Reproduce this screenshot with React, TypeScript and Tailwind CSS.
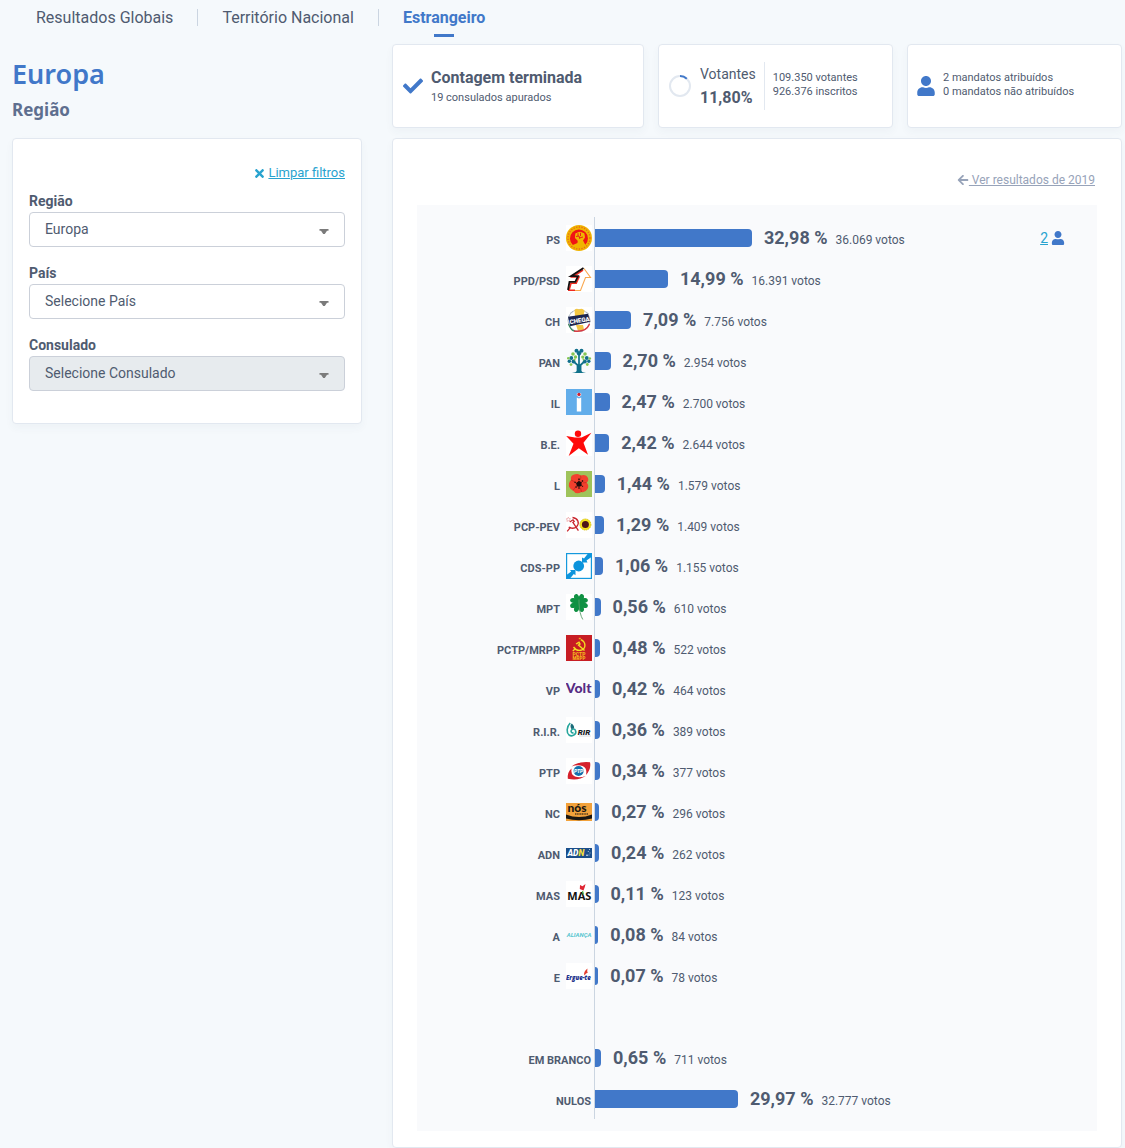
import React, { useState } from 'react';
import { FaArrowLeft, FaCheck, FaTimes, FaUser } from 'react-icons/fa';

type Result = {
    party: string;
    percent: string;
    votes: string;
    logo?: React.ReactNode;
    seats?: number;
};

const Logo: React.FC<{ children: React.ReactNode; bg?: string }> = ({ children, bg = '#fff' }) => (
    <svg viewBox="0 0 26 26" className="h-[26px] w-[26px] shrink-0" aria-hidden="true">
        <rect width="26" height="26" fill={bg} />
        {children}
    </svg>
);

const LogoPS = (
    <Logo>
        <circle cx="13" cy="13" r="13" fill="#f0b400" />
        <circle cx="13" cy="13" r="11" fill="none" stroke="#e8641e" strokeWidth="1.4" strokeDasharray="1.2 1.5" />
        <path d="M6.8 20A9 9 0 1 1 19.3 19.8L17 15.6 19 12.5 18.2 8.2 14 6.8 9.8 8.2 9 12.6 12 15.8 11.5 18Z" fill="#f01414" />
        <path d="M11.8 21.8V15.8L9 13 9.5 8.5 13.8 7 18 8.5 18.5 12 16.3 15V22Z" fill="#f0b400" />
        <path d="M10 11.5 13 11M12 8.2v2.8M14.5 7.8V11M13 13l4-1M13 11l.8 2.8" fill="none" stroke="#e8141c" strokeWidth="0.9" />
    </Logo>
);

const LogoPSD = (
    <Logo>
        <path d="M18 2.5 24.5 11.5H19.5L14.5 24.5H9" fill="none" stroke="#f9a850" strokeWidth="1.1" />
        <path d="M17 4 6.5 11H13L10.2 17.2H5L3 24.3H9" fill="none" stroke="#f02a20" strokeWidth="1.6" />
        <path d="M17.5 2 5 10.2H12L9.3 15.8H3.5L2 24" fill="none" stroke="#151010" strokeWidth="1.8" />
    </Logo>
);

const LogoCH = (
    <Logo>
        <circle cx="13" cy="13.5" r="11" fill="none" stroke="#b5bec8" strokeWidth="1" />
        <path d="M8.5 3Q10.5 1 13 2.5 16 .5 18.5 3.5L17.5 9H9Z" fill="#f3c743" />
        <path d="M10 18H17L18 22.5 12 24Z" fill="#f1c445" />
        <path d="M2.5 17C4.5 22.5 7 24 9 24.2" fill="none" stroke="#38845c" strokeWidth="1.2" />
        <path d="M8 24Q20 25.5 23.5 17" fill="none" stroke="#d93a43" strokeWidth="1.5" />
        <path d="M2 9.8 22 6.8 24.4 14.8 4.2 19.3Z" fill="#1c2550" />
        <text x="3.4" y="15.7" fontSize="6.2" fontWeight="900" fill="#fff" transform="rotate(-9 13 13)">CHEGA</text>
        <path d="M4 6.5 7 4.3M20 5l3 2.2" stroke="#aeb9c4" />
    </Logo>
);

const LogoPAN = (
    <Logo bg="#f9fafc">
        <path d="M11.5 24V17L7 13M13 24V6M14.6 24V17L19 13" fill="none" stroke="#10718a" strokeWidth="1.7" />
        <path d="M6 25Q10 24.8 11.5 22.5H14.6Q16 24.8 20 25Z" fill="#10718a" />
        <g fill="#116f8c">
            <circle cx="10.5" cy="2.8" r="2" /><circle cx="15.5" cy="2.8" r="2" /><circle cx="13" cy="5.2" r="2.2" />
            <circle cx="5.3" cy="10" r="1.9" /><circle cx="3.3" cy="13.3" r="1.7" /><circle cx="7.5" cy="13.5" r="2" />
            <circle cx="20.8" cy="10" r="1.9" /><circle cx="22.8" cy="13.3" r="1.7" /><circle cx="18.8" cy="13.5" r="2" />
        </g>
        <g fill="#85c653">
            <circle cx="7" cy="6" r="1.8" /><circle cx="9.5" cy="9" r="1.7" /><circle cx="19" cy="6" r="1.8" />
            <circle cx="16.8" cy="9.1" r="1.7" /><circle cx="2.3" cy="10.3" r="1.3" /><circle cx="8.6" cy="11.5" r="1" />
            <circle cx="23.8" cy="10.5" r="1.3" /><circle cx="17.5" cy="11.5" r="1" /><circle cx="5" cy="16.6" r="1.4" />
            <circle cx="21.3" cy="16.5" r="1.4" />
        </g>
    </Logo>
);

const LogoIL = (
    <Logo bg="#62adea">
        <path d="M10.8 4.6 13 3.8 15.2 4.6V6.6L13 8 10.8 6.6Z" fill="#fff" />
        <circle cx="13" cy="5.4" r="1.7" fill="#cf2031" />
        <path d="M10.8 8.5 13 9.5 15.2 8.5V22.5H10.8Z" fill="#fff" />
    </Logo>
);

const LogoBE = (
    <Logo>
        <circle cx="12" cy="3.8" r="3.2" fill="#ff0a0a" />
        <path d="M.2 6 9 7.5H15.5L25.5 2.8 17.5 12.8 22 24.8 12.8 18.3 2.7 26 7.5 13.7Z" fill="#ff0a0a" />
    </Logo>
);

const LogoL = (
    <Logo bg="#9fc35b">
        <path d="M5 9Q4 4 9 3.2 13 2.2 14.5 4.5 20 2.5 22 7 23 10 20.5 11.5 23.5 14.5 21.5 18 19 22 15.5 21 10 24 7 19.5 2 17 3 12.5 3.5 10 5 9Z" fill="#f3402e" />
        <path d="M14.5 4.5Q15.5 7 14 9M20.5 11.5 17 12M15.5 21 14.5 17M7 19.5 9.5 16M5 9 9 11" fill="none" stroke="#c4281c" strokeWidth=".7" />
        <circle cx="13" cy="13" r="2.6" fill="#200c0c" />
        <path d="M13 7.5v11M8.5 11l8.5 4.5M17 9.5l-7.5 7" stroke="#200c0c" strokeWidth="1.4" strokeDasharray="1.4 .8" />
    </Logo>
);

const LogoPCP = (
    <Logo>
        <path d="M6.5 5.5C12 6 13.8 11 10.8 14.5 8.5 17 4.5 16.5 2.7 15" fill="none" stroke="#c9252d" strokeWidth="1.3" />
        <path d="M3.8 10 7 7.8 8.2 9.4 6.9 10.4 12.4 18.6M4.6 15.2 1.2 19.3" fill="none" stroke="#c9252d" strokeWidth="1.3" />
        <path d="M2.3 5.2l.7 1.4 1.5.2-1.1 1.1.2 1.5L2.3 8.7.9 9.4l.3-1.5L.1 6.8l1.5-.2Z" fill="none" stroke="#e0787c" strokeWidth=".5" />
        <circle cx="19.4" cy="12.5" r="5.5" fill="#f8e51c" stroke="#d9c51b" strokeWidth="1" strokeDasharray="1.5 .7" />
        <circle cx="19.4" cy="12.5" r="3.5" fill="#4d1517" />
    </Logo>
);

const LogoCDS = (
    <Logo>
        <rect x=".6" y=".6" width="24.8" height="24.8" fill="none" stroke="#1599dd" strokeWidth="1.2" />
        <circle cx="12.7" cy="13" r="5.4" fill="#0d94dc" />
        <path d="M16 4.5V9.5H21.5L20.5 7.5 25.5 4V.5H22L18 5.5ZM4 17H9.5V22.3L7.8 21 4 25.5H.5V22L5.2 18.5Z" fill="#0d94dc" />
    </Logo>
);

const cloverLeaf = 'M13 9C10.6 7 7.6 4.8 8 2 8.4-.2 11.8-.8 13 2.4 14.2-.8 17.6-.2 18 2 18.4 4.8 15.4 7 13 9Z';

const LogoMPT = (
    <Logo>
        <g fill="#109143">
            <path d={cloverLeaf} transform="rotate(45 13 9)" />
            <path d={cloverLeaf} transform="rotate(135 13 9)" />
            <path d={cloverLeaf} transform="rotate(225 13 9)" />
            <path d={cloverLeaf} transform="rotate(315 13 9)" />
        </g>
        <path d="M13 5.5V9M13 9Q13.5 20 16.8 25.5" fill="none" stroke="#5c9f6d" strokeWidth=".9" />
    </Logo>
);

const LogoPCTP = (
    <Logo bg="#c71d24">
        <path d="M14.8 4.6C20.3 7 20 13.5 15.5 15 11.5 16.2 8.5 13.5 7.5 12M10 9 13 7.3 14 9 12.5 10 18.5 15.5M9 14 6.8 16" fill="none" stroke="#f3dd20" strokeWidth="1.4" />
        <path d="M12.8 3.5h2" stroke="#f3a81e" strokeWidth="1.4" />
        <text x="13" y="20.6" fontSize="5" fontWeight="900" fill="#f3b51e" textAnchor="middle">PCTP</text>
        <text x="13" y="24.8" fontSize="4.6" fontWeight="900" fill="#f3b51e" textAnchor="middle">MRPP</text>
    </Logo>
);

const LogoVolt = (
    <Logo bg="#f9fafc">
        <text x="-.2" y="17" fontSize="14" fontWeight="900" fill="#572b83" className="font-['Lato',sans-serif]">Volt</text>
    </Logo>
);

const LogoRIR = (
    <Logo>
        <path d="M4.2 6C.2 10 .5 16 3 18 6.5 20.3 11 17 9.5 13.5 8.8 11.5 6 11.5 5.3 13.5 4.5 15 6 16.5 7.5 15.5" fill="none" stroke="#26a59d" strokeWidth="1.6" />
        <path d="M5.3 12Q3.5 8.5 5.8 6.5 9 9.5 7.8 11.5Z" fill="#1a6c79" />
        <text x="11.8" y="17.6" fontSize="8" fontWeight="900" fontStyle="italic" fill="#191c1f">RIR</text>
        <path d="M13 19h12" stroke="#c2c6c9" strokeWidth=".6" />
    </Logo>
);

const LogoPTP = (
    <Logo>
        <path d="M5.5 8.5Q13 3 24 4.2 25.5 10.5 20 17 21.5 10 16.5 8 11.5 6.4 5.5 8.5Z" fill="#d5202b" />
        <path d="M1.8 20.8Q1.2 14 5.5 10.5 4.5 16.5 9 18.6 14 20.4 20 17.8 13 23 1.8 20.8Z" fill="#d5202b" />
        <circle cx="12.6" cy="13" r="5" fill="#1370ac" />
        <text x="12.6" y="15" fontSize="5" fontWeight="900" fontStyle="italic" fill="#fff" textAnchor="middle">PTP</text>
    </Logo>
);

const LogoNC = (
    <Logo bg="#f9fafc">
        <rect y="4" width="26" height="18" fill="#f2a13a" />
        <text x="1.5" y="12.8" fontSize="12" fontWeight="900" fill="#1b1713" className="font-['Lato',sans-serif]">nós</text>
        <path d="M9 15h13" stroke="#573c1b" strokeWidth="1.4" strokeDasharray="1.2 .5" />
        <path d="M0 15.5Q13 20.5 26 15.5V19.6Q13 22.8 0 19.6Z" fill="#1b1713" />
    </Logo>
);

const LogoADN = (
    <Logo bg="#f9fafc">
        <rect y="8" width="26" height="10" fill="#1b4e8a" />
        <text x="1.5" y="16" fontSize="8.5" fontWeight="900" fontStyle="italic" fill="#fff">
            AD<tspan fill="#f2dd3c">N</tspan>
        </text>
        <circle cx="21" cy="15.2" r=".8" fill="#fff" />
        <path d="M23.5 9v1M22.3 11v1M24 12.5v1M23 14.5v1" stroke="#d6dfe9" strokeWidth=".8" />
    </Logo>
);

const LogoMAS = (
    <Logo>
        <text x="1.3" y="19" fontSize="11" fontWeight="700" fill="#111" className="font-['Open_Sans','Noto_Sans',sans-serif]">MAS</text>
        <path d="M14 4 16.5 5.2 19.5 3 18.8 6 17.5 9.5 13.8 8Z" fill="#df2734" />
        <path d="M16.5 10 17.5 13.5" stroke="#57c040" strokeWidth="1.2" />
    </Logo>
);

const LogoAlianca = (
    <Logo bg="#f9fafc">
        <text x=".8" y="15" fontSize="6" fontStyle="italic" fontWeight="700" fill="#55c5cf">ALIANÇA</text>
    </Logo>
);

const LogoErgueTe = (
    <Logo>
        <text x="0" y="17" fontSize="6" fontWeight="800" fontStyle="italic" fill="#21318b" className="font-['Open_Sans',sans-serif]">Ergue-te</text>
        <path d="M18.4 12.5Q17 9 21.5 5.5 20.8 9.5 22 9.5 20 10 18.4 12.5Z" fill="#e63e2d" />
    </Logo>
);

const results: Result[] = [
    { party: 'PS', percent: '32,98', votes: '36.069', logo: LogoPS, seats: 2 },
    { party: 'PPD/PSD', percent: '14,99', votes: '16.391', logo: LogoPSD },
    { party: 'CH', percent: '7,09', votes: '7.756', logo: LogoCH },
    { party: 'PAN', percent: '2,70', votes: '2.954', logo: LogoPAN },
    { party: 'IL', percent: '2,47', votes: '2.700', logo: LogoIL },
    { party: 'B.E.', percent: '2,42', votes: '2.644', logo: LogoBE },
    { party: 'L', percent: '1,44', votes: '1.579', logo: LogoL },
    { party: 'PCP-PEV', percent: '1,29', votes: '1.409', logo: LogoPCP },
    { party: 'CDS-PP', percent: '1,06', votes: '1.155', logo: LogoCDS },
    { party: 'MPT', percent: '0,56', votes: '610', logo: LogoMPT },
    { party: 'PCTP/MRPP', percent: '0,48', votes: '522', logo: LogoPCTP },
    { party: 'VP', percent: '0,42', votes: '464', logo: LogoVolt },
    { party: 'R.I.R.', percent: '0,36', votes: '389', logo: LogoRIR },
    { party: 'PTP', percent: '0,34', votes: '377', logo: LogoPTP },
    { party: 'NC', percent: '0,27', votes: '296', logo: LogoNC },
    { party: 'ADN', percent: '0,24', votes: '262', logo: LogoADN },
    { party: 'MAS', percent: '0,11', votes: '123', logo: LogoMAS },
    { party: 'A', percent: '0,08', votes: '84', logo: LogoAlianca },
    { party: 'E', percent: '0,07', votes: '78', logo: LogoErgueTe },
];

const otherVotes: Result[] = [
    { party: 'EM BRANCO', percent: '0,65', votes: '711' },
    { party: 'NULOS', percent: '29,97', votes: '32.777' },
];

// 3px minimum so that the smallest parties still get a visible bar
const barWidth = (percent: string) => `calc(3px + ${parseFloat(percent.replace(',', '.')) * 0.93}%)`;

const ResultRow: React.FC<{ result: Result }> = ({ result }) => (
    <li className="flex h-[41px]">
        <div className="flex w-[178px] shrink-0 items-center justify-end gap-[5px] border-r border-[#cbd5e1] pr-0.5">
            <span className="pt-1.5 pr-px text-[11px] leading-4 font-bold">{result.party}</span>
            {result.logo}
        </div>
        <div className="flex min-w-0 flex-1 items-center">
            <div className="h-[18px] shrink-0 rounded-r bg-[#4178c9]" style={{ width: barWidth(result.percent) }} />
            <div className="ml-3 flex items-baseline gap-2 whitespace-nowrap">
                <span className="text-lg leading-6 font-bold">{result.percent} %</span>
                <span className="text-xs">{result.votes} votos</span>
            </div>
            {result.seats && (
                <div className="mr-8 ml-auto flex items-center gap-[3px] text-sm">
                    <a href="#mandatos" className="text-[#29a3cf] underline">{result.seats}</a>
                    <FaUser size={14} className="text-[#4178c9]" />
                </div>
            )}
        </div>
    </li>
);

const Card: React.FC<{ className?: string; children: React.ReactNode }> = ({ className = '', children }) => (
    <div className={`rounded border border-[#e2e8f0] bg-white shadow-[0_4px_8px_rgba(40,70,110,0.04)] ${className}`}>{children}</div>
);

type FilterProps = {
    id: string;
    label: string;
    options: string[];
    disabled?: boolean;
};

const Filter: React.FC<FilterProps> = ({ id, label, options, disabled }) => {
    const [value, setValue] = useState(options[0]);

    return (
        <div>
            <label htmlFor={id} className="block text-sm leading-[21px] font-bold">{label}</label>
            <div className="relative">
                <select
                    id={id}
                    value={value}
                    disabled={disabled}
                    onChange={(e) => setValue(e.target.value)}
                    className="block h-[35px] w-full appearance-none rounded border border-[#cbd0d9] bg-white pr-8 pb-0.5 pl-[15px] text-sm text-[#4f5b70] opacity-100 disabled:bg-[#e7ebee]"
                >
                    {options.map((option) => (
                        <option key={option}>{option}</option>
                    ))}
                </select>
                <svg viewBox="0 0 10 5" className="pointer-events-none absolute top-[17px] right-4 h-[5px] w-2.5" aria-hidden="true">
                    <path d="M.5 0h9v1.8H8L5.8 5H4.2L2 1.8H.5Z" fill="#7b7b7b" />
                </svg>
            </div>
        </div>
    );
};

const App: React.FC = () => {
    return (
        <div className="min-h-screen bg-[#f5f9fc] pr-[3px] pl-3 font-['Roboto',sans-serif] text-[#4f5b70]">
            <nav className="flex h-[44px] items-start pt-[9px] text-base leading-[17px]">
                <a href="#globais" className="px-6">Resultados Globais</a>
                <a href="#nacional" className="border-x border-[#cbd5e1] px-6">Território Nacional</a>
                <a href="#estrangeiro" aria-current="page" className="flex flex-col items-center gap-2 px-6 font-bold text-[#4178c9]">
                    Estrangeiro
                    <span className="h-[3px] w-5 bg-[#4178c9]" />
                </a>
            </nav>

            <div className="grid grid-cols-[35fr_73fr] items-start gap-[30px]">
                <aside>
                    <div className="h-[94px] pt-3 font-['Noto_Sans',sans-serif]">
                        <h1 className="text-[27px] leading-9 font-semibold text-[#4178c9]">Europa</h1>
                        <h2 className="mt-1 text-[17px] leading-7 font-bold text-[#5e6f8f]">Região</h2>
                    </div>
                    <Card className="px-4 pt-6 pb-8">
                        <div className="mb-2 flex items-center justify-end gap-0.5 text-[13px] leading-5 text-[#29a3cf]">
                            <FaTimes size={13} />
                            <button type="button" className="cursor-pointer underline">Limpar filtros</button>
                        </div>
                        <div className="flex flex-col gap-4">
                            <Filter id="regiao" label="Região" options={['Europa', 'Fora da Europa']} />
                            <Filter id="pais" label="País" options={['Selecione País']} />
                            <Filter id="consulado" label="Consulado" options={['Selecione Consulado']} disabled />
                        </div>
                    </Card>
                </aside>

                <main>
                    <div className="mb-2.5 grid grid-cols-[252fr_235fr_215fr] gap-3.5">
                        <Card className="flex h-[84px] items-center gap-2 pl-2.5">
                            <FaCheck size={20} className="text-[#4178c9]" />
                            <div>
                                <p className="text-base leading-6 font-bold">Contagem terminada</p>
                                <p className="text-[11px] leading-4">19 consulados apurados</p>
                            </div>
                        </Card>
                        <Card className="flex h-[84px] items-center pl-2.5">
                            <svg viewBox="0 0 22 22" className="h-[22px] w-[22px] shrink-0" aria-hidden="true">
                                <circle cx="11" cy="11" r="10" fill="none" stroke="#e2e8f0" strokeWidth="2" />
                                <path d="M11 1A10 10 0 0 1 17.8 3.7" fill="none" stroke="#4178c9" strokeWidth="2" />
                            </svg>
                            <div className="ml-[9px]">
                                <p className="text-sm leading-6">Votantes</p>
                                <p className="text-base leading-6 font-bold">11,80%</p>
                            </div>
                            <div className="ml-2 flex h-12 items-center border-l border-[#e2e8f0] pb-0.5 pl-2 text-[11px] leading-[14px] whitespace-nowrap">
                                <p>109.350 votantes<br />926.376 inscritos</p>
                            </div>
                        </Card>
                        <Card className="flex h-[84px] items-center gap-[7px] pl-2">
                            <FaUser size={20} className="text-[#4178c9]" />
                            <p className="pb-0.5 text-[11px] leading-[14px] whitespace-nowrap">
                                2 mandatos atribuídos<br />0 mandatos não atribuídos
                            </p>
                        </Card>
                    </div>

                    <Card className="px-6 pt-8 pb-4">
                        <div className="mb-4 flex justify-end pr-0.5">
                            <a href="#2019" className="flex items-center text-xs leading-[18px] text-[#97a3b9]">
                                <FaArrowLeft size={12} />
                                <span className="whitespace-pre underline"> Ver resultados de 2019</span>
                            </a>
                        </div>
                        <div className="bg-[#f9fafc] py-3">
                            <ul>
                                {results.map((result) => (
                                    <ResultRow key={result.party} result={result} />
                                ))}
                            </ul>
                            <div className="h-[41px] w-[178px] border-r border-[#cbd5e1]" />
                            <ul>
                                {otherVotes.map((result) => (
                                    <ResultRow key={result.party} result={result} />
                                ))}
                            </ul>
                        </div>
                    </Card>
                </main>
            </div>
        </div>
    );
};

export default App;
